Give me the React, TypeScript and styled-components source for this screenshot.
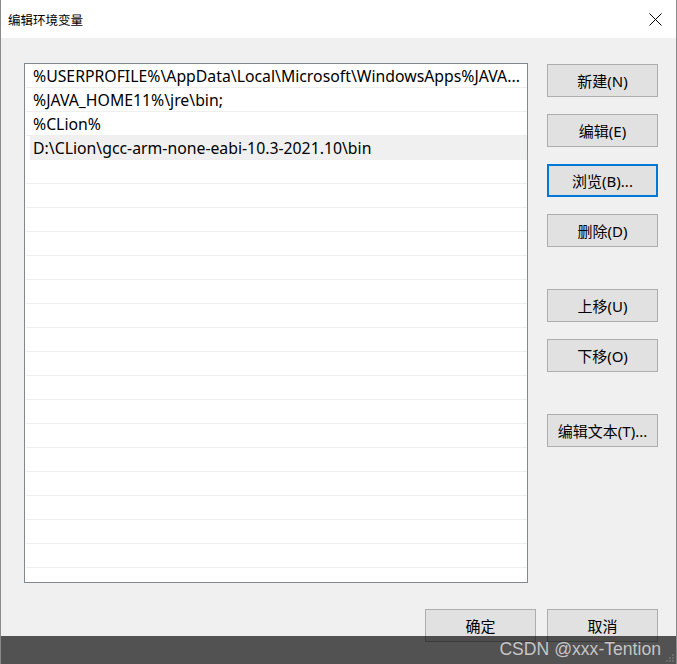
import React from "react";
import styled, { createGlobalStyle } from "styled-components";

const Global = createGlobalStyle`
  html, body { margin: 0; padding: 0; background: #f0f0f0; }
  body { width: 677px; height: 664px; overflow: hidden; }
  * { box-sizing: border-box; }
`;

const FONT = `"Noto Sans", "Noto Sans CJK SC", sans-serif`;

const Window = styled.div`
  position: relative;
  width: 677px;
  height: 664px;
  background: #f0f0f0;
  border-left: 1px solid #8a8a8a;
  border-right: 1px solid #8a8a8a;
  font-family: ${FONT};
  color: #000;
  overflow: hidden;
  display: flex;
  flex-direction: column;
`;

const TitleBar = styled.div`
  height: 38px;
  flex: none;
  background: #ffffff;
  display: flex;
  align-items: center;
  justify-content: space-between;
  padding: 0 14px 0 7px;
`;

const Title = styled.span`
  font-size: 12.5px;
  font-weight: 400;
  color: #000;
`;

const CloseIcon = styled.svg`
  width: 13px;
  height: 13px;
  display: block;
`;

const Body = styled.div`
  flex: 1;
  display: flex;
  flex-direction: column;
  padding: 25px 18px 0 23px;
`;

const Main = styled.div`
  display: flex;
  gap: 19px;
`;

const List = styled.div`
  width: 504px;
  height: 520px;
  border: 1px solid #828790;
  background: #ffffff;
  overflow: hidden;
  display: flex;
  flex-direction: column;
  padding: 0 0 0 1px;
`;

const Row = styled.div<{ $selected?: boolean }>`
  flex: none;
  height: 24px;
  border-bottom: 1px solid #efefef;
  display: flex;
  align-items: center;
  font-size: 15.8px;
  white-space: nowrap;
  overflow: hidden;
  background: ${(p) => (p.$selected ? "#f0f0f0" : "#ffffff")};
  margin-left: ${(p) => (p.$selected ? "4px" : "0")};
  padding-left: ${(p) => (p.$selected ? "3px" : "7px")};
`;

const Side = styled.div`
  display: flex;
  flex-direction: column;
  padding-top: 1px;
`;

const Button = styled.button<{ $gap?: number; $focused?: boolean }>`
  width: 111px;
  height: 33px;
  margin-top: ${(p) => p.$gap ?? 0}px;
  background: #e1e1e1;
  border: ${(p) => (p.$focused ? "2px solid #0078d7" : "1px solid #adadad")};
  border-radius: 0;
  font-family: ${FONT};
  font-size: 15px;
  color: #000;
  padding: 0;
  display: flex;
  align-items: center;
  justify-content: center;
  white-space: nowrap;
`;

const Footer = styled.div`
  display: flex;
  justify-content: flex-end;
  gap: 11px;
  margin-top: 26px;
`;

const Watermark = styled.div`
  position: absolute;
  left: 0;
  right: 0;
  bottom: 0;
  height: 28px;
  background: rgba(0, 0, 0, 0.66);
  display: flex;
  align-items: center;
  justify-content: flex-end;
  padding-right: 15px;
  padding-bottom: 2px;
`;

const MarkText = styled.span`
  font-family: "Liberation Sans", Arial, sans-serif;
  font-size: 17.6px;
  color: rgba(220, 220, 220, 0.85);
`;

const Grip = styled.svg`
  position: absolute;
  right: 1px;
  bottom: 1px;
  width: 10px;
  height: 10px;
`;

const rows = [
  "%USERPROFILE%\\AppData\\Local\\Microsoft\\WindowsApps%JAVA...",
  "%JAVA_HOME11%\\jre\\bin;",
  "%CLion%",
  "D:\\CLion\\gcc-arm-none-eabi-10.3-2021.10\\bin",
];

export default function App() {
  const empties = Array.from({ length: 18 });
  return (
    <>
      <Global />
      <Window>
        <TitleBar>
          <Title>编辑环境变量</Title>
          <CloseIcon viewBox="0 0 13 13">
            <path d="M0.5 0.5 L12.5 12.5 M12.5 0.5 L0.5 12.5" stroke="#000" strokeWidth="1" fill="none" />
          </CloseIcon>
        </TitleBar>
        <Body>
          <Main>
            <List>
              {rows.map((r, i) => (
                <Row key={i} $selected={i === 3}>
                  {r}
                </Row>
              ))}
              {empties.map((_, i) => (
                <Row key={"e" + i} />
              ))}
            </List>
            <Side>
              <Button>新建(N)</Button>
              <Button $gap={17}>编辑(E)</Button>
              <Button $gap={17} $focused>
                浏览(B)...
              </Button>
              <Button $gap={17}>删除(D)</Button>
              <Button $gap={42}>上移(U)</Button>
              <Button $gap={17}>下移(O)</Button>
              <Button $gap={42}>编辑文本(T)...</Button>
            </Side>
          </Main>
          <Footer>
            <Button>确定</Button>
            <Button>取消</Button>
          </Footer>
        </Body>
        <Watermark>
          <MarkText>CSDN @xxx-Tention</MarkText>
          <Grip viewBox="0 0 10 10">
            <rect x="7" y="1" width="2" height="2" fill="#6a6a6a" />
            <rect x="4" y="4" width="2" height="2" fill="#6a6a6a" />
            <rect x="7" y="4" width="2" height="2" fill="#6a6a6a" />
            <rect x="1" y="7" width="2" height="2" fill="#6a6a6a" />
            <rect x="4" y="7" width="2" height="2" fill="#6a6a6a" />
            <rect x="7" y="7" width="2" height="2" fill="#6a6a6a" />
          </Grip>
        </Watermark>
      </Window>
    </>
  );
}
